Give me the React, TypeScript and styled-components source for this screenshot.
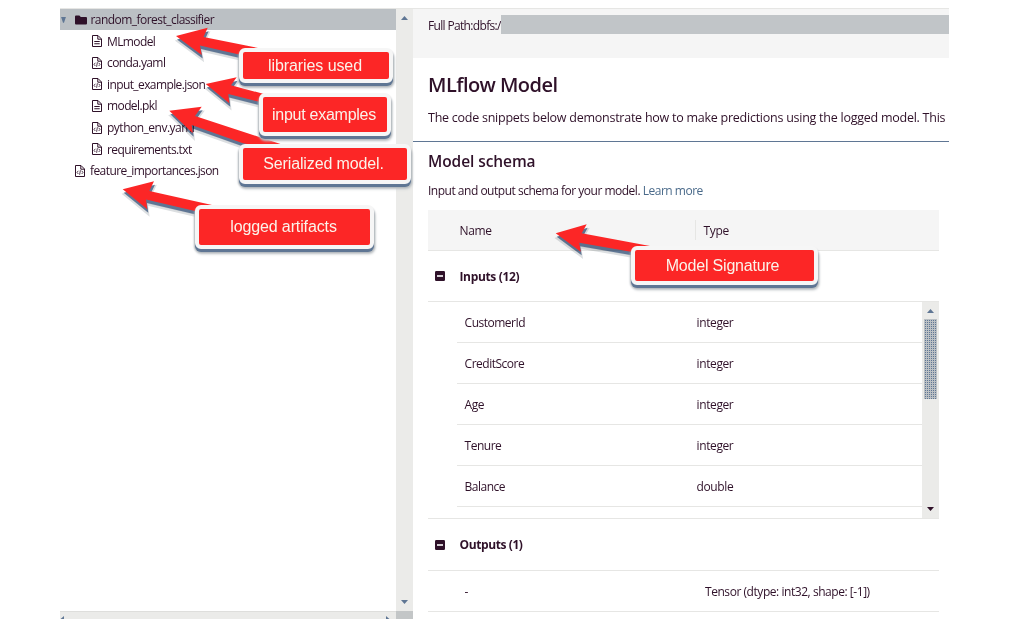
import React from 'react';
import styled, { createGlobalStyle } from 'styled-components';

const ink = '#2f1129';
const line = '#e6e6e4';
const blue = '#5f7694';

const Global = createGlobalStyle`
  * { box-sizing: border-box; }
  body {
    margin: 0;
    background: #fff;
    color: ${ink};
    font-family: "Open Sans", "Noto Sans", sans-serif;
    font-size: 12px;
  }
`;

const Page = styled.div`
  position: relative;
  display: flex;
  width: 1009px;
  height: 619px;
  padding: 8px 60px 0;
  overflow: hidden;
`;

const Text = styled.span<{ $ls?: number; $size?: number; $weight?: number }>`
  white-space: nowrap;
  letter-spacing: ${p => p.$ls ?? 0}px;
  font-size: ${p => p.$size ?? 12}px;
  font-weight: ${p => p.$weight ?? 400};
`;

const Side = styled.aside`
  display: flex;
  flex-direction: column;
  width: 353px;
  border-top: 1px solid ${line};
`;
const SideBody = styled.div`
  display: flex;
  flex: 1;
`;
const Tree = styled.div`
  flex: 1;
`;
const TreeRow = styled.div<{ $indent: number; $selected?: boolean }>`
  display: flex;
  align-items: center;
  height: ${p => (p.$selected ? 21.4 : 21.6)}px;
  padding-left: ${p => p.$indent}px;
  background: ${p => (p.$selected ? '#bbc0c4' : 'transparent')};
  svg { flex: none; margin-right: ${p => (p.$selected ? 3.5 : 4)}px; }
`;
const Caret = styled.i`
  width: 5px;
  height: 6px;
  margin-right: 9px;
  background: ${blue};
  clip-path: polygon(0 0, 100% 0, 60% 100%, 40% 100%);
`;

const VTrack = styled.div`
  display: flex;
  flex: none;
  flex-direction: column;
  align-items: center;
  width: 17px;
  background: #ebebe9;
`;
const Tri = styled.i<{ $dir: 'up' | 'down' | 'left' | 'right'; $color?: string }>`
  flex: none;
  width: ${p => (p.$dir === 'up' || p.$dir === 'down' ? 7 : 4)}px;
  height: ${p => (p.$dir === 'up' || p.$dir === 'down' ? 4 : 7)}px;
  background: ${p => p.$color ?? blue};
  clip-path: ${p =>
    ({
      up: 'polygon(50% 0, 100% 100%, 0 100%)',
      down: 'polygon(0 0, 100% 0, 50% 100%)',
      left: 'polygon(0 50%, 100% 0, 100% 100%)',
      right: 'polygon(0 0, 100% 50%, 0 100%)',
    })[p.$dir]};
`;
const SideTrack = styled(VTrack)`
  justify-content: space-between;
  padding: 7px 0;
`;
const HBar = styled.div`
  display: flex;
  height: 8px;
`;
const HTrack = styled.div`
  display: flex;
  flex: 1;
  justify-content: space-between;
  padding: 4px 6px 0 0;
  border-top: 1px solid #dededc;
  background: #ebebe9;
`;
const Corner = styled.div`
  width: 17px;
  background: #c3c6c7;
`;

const Main = styled.main`
  display: flex;
  flex-direction: column;
  width: 536px;
`;
const PathBar = styled.header`
  display: flex;
  align-items: flex-start;
  height: 50px;
  padding: 6px 0 0 15px;
  border-top: 1px solid ${line};
  background: #f5f5f5;
`;
const PathLabel = styled.div`
  width: 73px;
  line-height: 22px;
`;
const Redacted = styled.div`
  flex: 1;
  height: 19px;
  background: #c1c5c8;
`;
const Intro = styled.section`
  height: 84px;
  padding: 12px 0 0 15px;
  border-bottom: 1px solid ${blue};
`;
const H1 = styled.h1`
  margin: 0;
  line-height: 26px;
`;
const P = styled.p`
  margin: 0;
  line-height: 20px;
`;
const IntroP = styled(P)`
  margin-top: 10px;
`;
const Schema = styled.section`
  padding: 6px 10px 0 15px;
`;
const H2 = styled.h2`
  margin: 0;
  line-height: 25px;
`;
const SchemaP = styled(P)`
  margin-top: 7px;
  height: 29px;
  a { color: #4a6a8a; }
`;
const HeadRow = styled.div`
  display: flex;
  align-items: center;
  height: 41px;
  background: #f5f5f5;
  border-bottom: 1px solid ${line};
`;
const HeadName = styled.div`
  width: 267px;
  padding-left: 31.5px;
`;
const HeadType = styled.div`
  height: 20px;
  padding-left: 7.5px;
  border-left: 1px solid ${line};
  line-height: 22px;
`;
const Group = styled.div<{ $h: number }>`
  display: flex;
  align-items: center;
  height: ${p => p.$h}px;
  padding-left: 7px;
  border-bottom: 1px solid ${line};
  svg { flex: none; margin-right: 14.5px; }
`;
const Scroller = styled.div`
  display: flex;
  height: 217px;
  border-bottom: 1px solid ${line};
`;
const Rows = styled.div`
  flex: 1;
  padding-left: 29px;
`;
const Row = styled.div`
  display: flex;
  align-items: center;
  height: 41px;
  padding-left: 7.6px;
  border-bottom: 1px solid ${line};
`;
const Cell = styled.div<{ $w?: number }>`
  width: ${p => (p.$w ? `${p.$w}px` : 'auto')};
`;
const OutRow = styled(Row)`
  padding-left: 36.5px;
`;
const TableTrack = styled(VTrack)`
  padding: 7px 0;
`;
const Thumb = styled.div`
  width: 13px;
  height: 80px;
  margin: 6px 0 auto;
  background-color: #bbc0c4;
  background-image: radial-gradient(circle at 1.5px 1.5px, ${blue} 0.7px, transparent 0.8px);
  background-size: 2px 2px;
`;

const Arrows = styled.svg`
  position: absolute;
  inset: 0;
  pointer-events: none;
  mix-blend-mode: multiply;
`;
const ArrowFaces = styled(Arrows)`
  mix-blend-mode: normal;
`;
const Callout = styled.div<{ $x: number; $y: number; $w: number; $h: number }>`
  position: absolute;
  left: ${p => p.$x}px;
  top: ${p => p.$y}px;
  width: ${p => p.$w}px;
  height: ${p => p.$h}px;
  display: flex;
  align-items: center;
  justify-content: center;
  border: 4px solid #f6f6f6;
  border-radius: 6px;
  background: #fc2626;
  box-shadow: 0 3px 0 ${blue}, 0 3px 2px 1px #b0b6bb, 1px 5px 3px #c4c8cb;
  color: #fbf3ea;
  font-family: "Liberation Sans", Arial, sans-serif;
  font-size: 16px;
  line-height: 18px;
  white-space: nowrap;
`;
const CalloutText = styled.span<{ $dx: number; $ls: number }>`
  padding-right: ${p => p.$dx}px;
  letter-spacing: ${p => p.$ls}px;
`;

const FileIcon = ({ code }: { code?: boolean }) => (
  <svg width="12" height="12" viewBox="0 0 12 12" fill="none" stroke={ink} strokeWidth="1">
    <path d="M1.5.5H7L10.5 4v7.5h-9zM6.8.8v3.4h3.5" />
    {code ? (
      <path d="M4.3 5.8 3 7.4 4.3 9M7.7 5.8 9 7.4 7.7 9M6.4 5.2 5.6 9.8" strokeWidth=".8" />
    ) : (
      <path d="M3.3 6.5h5.4M3.3 8.8h5.4" strokeWidth="1.1" />
    )}
  </svg>
);
const FolderIcon = () => (
  <svg width="12" height="12" viewBox="0 0 12 12">
    <path d="M0 2.5Q0 1.5 1 1.5H4.4L5.8 3H11Q12 3 12 4v5.5Q12 10.5 11 10.5H1Q0 10.5 0 9.5z" fill={ink} />
  </svg>
);
const MinusIcon = () => (
  <svg width="10" height="10" viewBox="0 0 10 10">
    <rect width="10" height="10" rx="1.2" fill={ink} />
    <path d="M2 5h6" stroke="#fff" strokeWidth="1.6" />
  </svg>
);

const files = [
  { name: 'MLmodel', code: false },
  { name: 'conda.yaml', code: true },
  { name: 'input_example.json', code: true },
  { name: 'model.pkl', code: false },
  { name: 'python_env.yaml', code: true, ls: -0.5 },
  { name: 'requirements.txt', code: true },
];
const columns = [
  ['CustomerId', 'integer'],
  ['CreditScore', 'integer'],
  ['Age', 'integer'],
  ['Tenure', 'integer'],
  ['Balance', 'double'],
];
const arrows = [
  '176,36 207.7,27.7 203.5,37 258,48 258,56 238,54.3 200,45.5 201.7,55',
  '205.7,84 236.7,77.3 231,85.3 264,94 264,103 259,101.7 228.3,94 229.3,103.3',
  '169.3,110.7 201.7,106.7 195,116 282,144.5 282,150 243,143.3 191.7,125 192.7,133.3',
  '122.7,189.3 154,181.3 149.3,191 212,205 212,214 195,211 146,199.5 147.3,209.3',
  '555.7,233.3 586.7,224.3 581.7,233.3 650,246 650,254 631,251.7 579.3,242.7 580.7,251.7',
];
const callouts = [
  { t: 'libraries used', x: 239, y: 48, w: 154, h: 35, dx: 2, ls: -0.08 },
  { t: 'input examples', x: 259, y: 93, w: 132, h: 43, dx: 2, ls: -0.26 },
  { t: 'Serialized model.', x: 239, y: 144, w: 172, h: 40, dx: 3, ls: -0.12 },
  { t: 'logged artifacts', x: 195, y: 205, w: 179, h: 44, dx: 2, ls: -0.12 },
  { t: 'Model Signature', x: 631, y: 246, w: 187, h: 39, dx: 4, ls: -0.2 },
];

export default function App() {
  return (
    <Page>
      <Global />
      <Side>
        <SideBody>
          <Tree>
            <TreeRow $indent={1} $selected>
              <Caret />
              <FolderIcon />
              <Text $ls={-0.54}>random_forest_classifier</Text>
            </TreeRow>
            {files.map(f => (
              <TreeRow key={f.name} $indent={31}>
                <FileIcon code={f.code} />
                <Text $ls={f.ls ?? -0.6}>{f.name}</Text>
              </TreeRow>
            ))}
            <TreeRow $indent={14}>
              <FileIcon code />
              <Text $ls={-0.58}>feature_importances.json</Text>
            </TreeRow>
          </Tree>
          <SideTrack>
            <Tri $dir="up" />
            <Tri $dir="down" />
          </SideTrack>
        </SideBody>
        <HBar>
          <HTrack>
            <Tri $dir="left" />
            <Tri $dir="right" />
          </HTrack>
          <Corner />
        </HBar>
      </Side>
      <Main>
        <PathBar>
          <PathLabel><Text $ls={-0.66}>Full Path:dbfs:/</Text></PathLabel>
          <Redacted />
        </PathBar>
        <Intro>
          <H1><Text $size={20} $weight={600} $ls={-0.55}>MLflow Model</Text></H1>
          <IntroP>
            <Text $ls={-0.25} $size={12.5}>
              The code snippets below demonstrate how to make predictions using the logged model. This
            </Text>
          </IntroP>
        </Intro>
        <Schema>
          <H2><Text $size={15.5} $weight={600} $ls={-0.08}>Model schema</Text></H2>
          <SchemaP>
            <Text $ls={-0.49}>Input and output schema for your model. <a>Learn more</a></Text>
          </SchemaP>
          <HeadRow>
            <HeadName><Text $ls={-0.35} $weight={500}>Name</Text></HeadName>
            <HeadType><Text $ls={-0.35} $weight={500}>Type</Text></HeadType>
          </HeadRow>
          <Group $h={51}>
            <MinusIcon />
            <Text $ls={-0.35} $weight={700}>Inputs (12)</Text>
          </Group>
          <Scroller>
            <Rows>
              {columns.map(([name, type]) => (
                <Row key={name}>
                  <Cell $w={232}><Text $ls={-0.5}>{name}</Text></Cell>
                  <Cell><Text $ls={-0.4}>{type}</Text></Cell>
                </Row>
              ))}
            </Rows>
            <TableTrack>
              <Tri $dir="up" />
              <Thumb />
              <Tri $dir="down" $color={ink} />
            </TableTrack>
          </Scroller>
          <Group $h={52}>
            <MinusIcon />
            <Text $ls={-0.4} $weight={700}>Outputs (1)</Text>
          </Group>
          <OutRow>
            <Cell $w={240.5}><Text>-</Text></Cell>
            <Cell><Text $ls={-0.45}>Tensor (dtype: int32, shape: [-1])</Text></Cell>
          </OutRow>
        </Schema>
      </Main>
      <Arrows width="1009" height="619">
        {arrows.map(a => (
          <g key={a}>
            <polygon points={a} fill="#c8cccf" stroke="#dcdfe1" strokeWidth="2" transform="translate(1 5)" />
            <polygon points={a} fill={blue} transform="translate(1 3.5)" />
          </g>
        ))}
      </Arrows>
      <ArrowFaces width="1009" height="619">
        {arrows.map(a => (
          <polygon key={a} points={a} fill="#fc2626" />
        ))}
      </ArrowFaces>
      {callouts.map(c => (
        <Callout key={c.t} $x={c.x} $y={c.y} $w={c.w} $h={c.h}>
          <CalloutText $dx={c.dx} $ls={c.ls}>{c.t}</CalloutText>
        </Callout>
      ))}
    </Page>
  );
}
